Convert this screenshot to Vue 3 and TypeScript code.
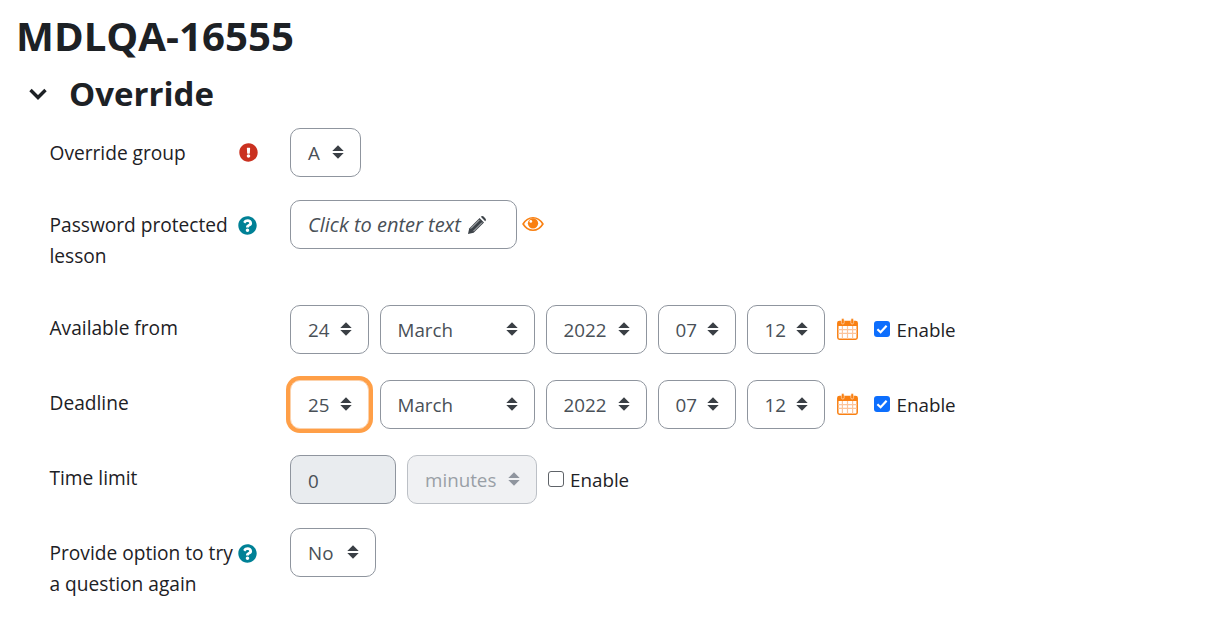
<script setup lang="ts">
interface Sel { text: string; width: number; focus?: boolean; disabled?: boolean }
const availableFrom: Sel[] = [
  { text: '24', width: 79 },
  { text: 'March', width: 155.5 },
  { text: '2022', width: 101.5 },
  { text: '07', width: 78.5 },
  { text: '12', width: 78.5 },
]
const deadline: Sel[] = [
  { text: '25', width: 79, focus: true },
  { text: 'March', width: 155.5 },
  { text: '2022', width: 101.5 },
  { text: '07', width: 78.5 },
  { text: '12', width: 78.5 },
]
const dateRows = [
  { label: 'Available from', sels: availableFrom },
  { label: 'Deadline', sels: deadline },
]
const qPath = 'M504 256c0 136.997-111.043 248-248 248S8 392.997 8 256C8 119.083 119.043 8 256 8s248 111.083 248 248zM262.655 90c-54.497 0-89.255 22.957-116.549 63.758-3.536 5.286-2.353 12.415 2.715 16.258l34.699 26.31c5.205 3.947 12.621 3.008 16.665-2.122 17.864-22.658 30.113-35.797 57.303-35.797 20.429 0 45.698 13.148 45.698 32.958 0 14.976-12.363 22.667-32.534 33.976C247.128 238.528 216 254.941 216 296v4c0 6.627 5.373 12 12 12h56c6.627 0 12-5.373 12-12v-1.333c0-28.462 83.186-29.647 83.186-106.667 0-58.002-60.165-102-116.531-102zM256 338c-25.365 0-46 20.635-46 46 0 25.364 20.635 46 46 46s46-20.636 46-46c0-25.365-20.635-46-46-46z'
const ePath = 'M504 256c0 136.997-111.043 248-248 248S8 392.997 8 256C8 119.083 119.043 8 256 8s248 111.083 248 248zm-248 50c-25.405 0-46 20.595-46 46s20.595 46 46 46 46-20.595 46-46-20.595-46-46-46zm-43.673-165.346l7.418 136c.347 6.364 5.609 11.346 11.982 11.346h48.546c6.373 0 11.635-4.982 11.982-11.346l7.418-136c.375-6.874-5.098-12.654-11.982-12.654h-63.383c-6.884 0-12.356 5.78-11.981 12.654z'
const arrowPath = 'M6 .3 L11.7 6 H.3 Z M.3 8 H11.7 L6 13.7 Z'
</script>

<template>
  <main class="page">
    <h2 class="title">MDLQA-16555</h2>
    <div class="section">
      <svg class="chev" viewBox="0 0 20 14" width="20" height="14"><path d="M2.5 3 L10 10.5 L17.5 3" fill="none" stroke="#1d2125" stroke-width="3.4" /></svg>
      <h3 class="section-title">Override</h3>
    </div>

    <div class="row row-group">
      <div class="label">
        <span class="label-text">Override group</span>
        <svg class="ic ic-err" viewBox="0 0 512 512"><path :d="ePath" fill="#ca3120" /></svg>
      </div>
      <div class="controls">
        <div class="sel" style="width: 71px">
          <span>A</span>
          <svg class="arrows" viewBox="0 0 12 14"><path :d="arrowPath" fill="#3a3f45" /></svg>
        </div>
      </div>
    </div>

    <div class="row row-pass">
      <div class="label">
        <span class="label-text narrow">Password protected lesson</span>
        <svg class="ic ic-q" viewBox="0 0 512 512"><path :d="qPath" fill="#008196" /></svg>
      </div>
      <div class="controls">
        <div class="textedit">
          <em>Click to enter text</em>
          <svg class="pencil" viewBox="0 0 20 20">
            <path d="M1 19 L2.2 13.4 L12.6 3 L17 7.4 L6.6 17.8 Z" fill="#3c4248" />
            <path d="M13.8 1.8 C14.8 .8 15.8 .8 16.6 1.6 L18.4 3.4 C19.2 4.2 19.2 5.2 18.2 6.2 L13.8 1.8Z" fill="#3c4248" />
            <path d="M3.8 13.6 L12.6 4.8 M6.4 16.2 L15.2 7.4" stroke="#fff" stroke-width=".7" />
          </svg>
        </div>
        <svg class="eye" viewBox="0 0 24 16">
          <path d="M1.2 8 C4 3.4 7.6 1.2 12 1.2 S20 3.4 22.8 8 C20 12.6 16.4 14.8 12 14.8 S4 12.6 1.2 8Z" fill="none" stroke="#f98012" stroke-width="1.8" />
          <circle cx="12" cy="7.2" r="5.6" fill="#f98012" />
          <circle cx="9.6" cy="5.2" r="1.5" fill="#fff" />
        </svg>
      </div>
    </div>

    <div v-for="r in dateRows" :key="r.label" class="row row-date">
      <div class="label"><span class="label-text">{{ r.label }}</span></div>
      <div class="controls gap">
        <div v-for="s in r.sels" :key="s.text" class="sel" :class="{ focus: s.focus }" :style="{ width: s.width + 'px' }">
          <span>{{ s.text }}</span>
          <svg class="arrows" viewBox="0 0 12 14"><path :d="arrowPath" fill="#3a3f45" /></svg>
        </div>
        <svg class="cal" viewBox="0 0 21 22">
          <rect x=".8" y="3.4" width="19.4" height="17.8" rx="1.6" fill="#fff" stroke="#f98012" stroke-width="1.5" />
          <rect x="1" y="3.5" width="19" height="4.5" fill="#f98012" />
          <rect x="4.4" y=".6" width="2.8" height="5.4" rx="1.3" fill="#f98012" stroke="#fff" stroke-width=".5" />
          <rect x="13.8" y=".6" width="2.8" height="5.4" rx="1.3" fill="#f98012" stroke="#fff" stroke-width=".5" />
          <path d="M1 11.6 H20 M1 15.4 H20 M5.4 8 V21 M10.5 8 V21 M15.6 8 V21" stroke="#fcc49a" stroke-width="1.2" />
        </svg>
        <label class="check">
          <span class="box on">
            <svg viewBox="0 0 16 16"><path d="M3.4 8.2 L6.6 11.2 L12.6 4.8" fill="none" stroke="#fff" stroke-width="2.2" /></svg>
          </span>
          Enable
        </label>
      </div>
    </div>

    <div class="row row-limit">
      <div class="label"><span class="label-text">Time limit</span></div>
      <div class="controls">
        <div class="num">0</div>
        <div class="sel disabled" style="width: 130px">
          <span>minutes</span>
          <svg class="arrows" viewBox="0 0 12 14"><path :d="arrowPath" fill="#8f959e" /></svg>
        </div>
        <label class="check small">
          <span class="box"></span>
          Enable
        </label>
      </div>
    </div>

    <div class="row row-try">
      <div class="label">
        <span class="label-text wide">Provide option to try a question again</span>
        <svg class="ic ic-q" viewBox="0 0 512 512"><path :d="qPath" fill="#008196" /></svg>
      </div>
      <div class="controls">
        <div class="sel" style="width: 86px">
          <span>No</span>
          <svg class="arrows" viewBox="0 0 12 14"><path :d="arrowPath" fill="#3a3f45" /></svg>
        </div>
      </div>
    </div>
  </main>
</template>

<style>
html, body { background: #fff; }
</style>

<style scoped>
.page {
  width: 1207px;
  height: 622px;
  overflow: hidden;
  box-sizing: border-box;
  padding: 12px 0 0 16px;
  font-family: "Open Sans", "Noto Sans", sans-serif;
  font-size: 18.8px;
  color: #1d2125;
  background: #fff;
}
.title {
  margin: 0;
  font-size: 40.2px;
  line-height: 48px;
  font-weight: 700;
}
.section {
  display: flex;
  align-items: center;
  margin-top: 11px;
  padding-left: 12px;
  height: 46px;
}
.chev { margin-right: 21px; }
.section-title {
  margin: 0;
  font-size: 33px;
  line-height: 40px;
  font-weight: 700;
}
.row {
  display: flex;
  margin-left: 34px;
}
.row-group { margin-top: 11px; height: 72px; }
.row-pass { height: 105px; }
.row-date { height: 75px; }
.row-limit { height: 73px; }
.label {
  width: 240px;
  flex: none;
  display: flex;
  justify-content: space-between;
  align-items: flex-start;
  padding-right: 31px;
  box-sizing: border-box;
  font-size: 19.15px;
  line-height: 31px;
  padding-top: 10px;
}
.label-text { margin-left: -0.5px; }
.row-date .label { padding-top: 8px; }
.row-limit .label { padding-top: 8px; }
.label-text.narrow { width: 182px; }
.label-text.wide { width: 188px; }
.ic { width: 19px; height: 19px; flex: none; margin-top: 6px; margin-right: 2px; }
.ic-err { margin-top: 5px; margin-right: 1px; }
.controls {
  display: flex;
  align-items: flex-start;
}
.controls.gap { gap: 10.5px; }
.sel {
  box-sizing: border-box;
  height: 49px;
  border: 1px solid #8f959e;
  border-radius: 10px;
  padding: 0 16px 0 17px;
  display: flex;
  align-items: center;
  justify-content: space-between;
  background: #fff;
  color: #495057;
  flex: none;
}
.sel.focus {
  border: 1px solid #fcd2ac;
  box-shadow: 0 0 0 4px #ff9f47;
}
.arrows { width: 12px; height: 14px; flex: none; margin-top: -1px; }
.textedit {
  box-sizing: border-box;
  width: 227px;
  height: 49px;
  border: 1px solid #8f959e;
  border-radius: 10px;
  padding-left: 17px;
  display: flex;
  align-items: center;
  color: #495057;
}
.textedit em { font-size: 20px; }
.pencil { width: 20px; height: 20px; margin-left: 6px; flex: none; }
.eye { width: 22px; height: 16px; margin: 16px 0 0 5px; flex: none; }
.cal { width: 21px; height: 22px; flex: none; margin: 13px 0 0 1.5px; }
.check {
  display: flex;
  align-items: center;
  height: 49px;
  gap: 7px;
  flex: none;
  margin-left: 5px;
}
.check.small { margin-left: 11px; gap: 6px; }
.box {
  box-sizing: border-box;
  width: 16px;
  height: 16px;
  border-radius: 3px;
  border: 1px solid #5f6368;
  background: #fff;
  margin-top: -2px;
  display: block;
}
.box.on { background: #0d6efd; border: 0; }
.box svg { display: block; width: 16px; height: 16px; }
.num {
  box-sizing: border-box;
  width: 106px;
  height: 49px;
  border: 1px solid #8f959e;
  border-radius: 10px;
  background: #e9ecef;
  color: #495057;
  padding: 3px 0 0 17px;
  display: flex;
  align-items: center;
  margin-right: 11px;
}
.sel.disabled {
  background: #f0f1f3;
  color: #999fa6;
  border-color: #bcc0c6;
}
</style>
